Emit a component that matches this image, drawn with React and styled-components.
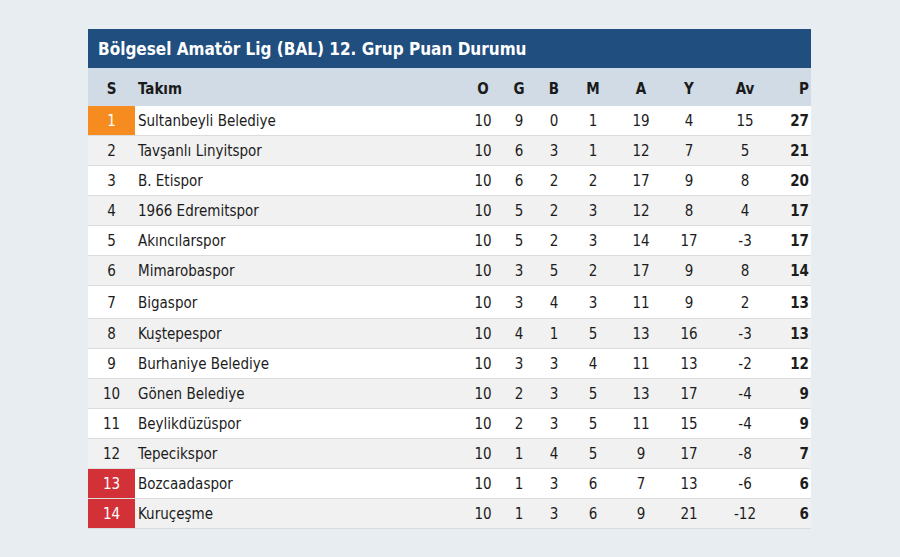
import React from "react";
import styled, { createGlobalStyle } from "styled-components";

const Global = createGlobalStyle`
  html, body { margin: 0; padding: 0; background: #e8edf2; }
  body { font-family: "DejaVu Sans Condensed", "DejaVu Sans", sans-serif; color: #1c1c1c; }
`;

const Page = styled.div`
  width: 900px;
  height: 557px;
  padding-top: 29px;
  box-sizing: border-box;
  display: flex;
  justify-content: center;
`;

const Table = styled.div`
  width: 723px;
  margin-left: -1px;
  display: flex;
  flex-direction: column;
`;

const Title = styled.div`
  height: 39px;
  background: #1f4e7f;
  color: #fff;
  font-weight: bold;
  font-size: 17px;
  display: flex;
  align-items: center;
  padding-left: 10px;
`;

const cols = "47px 328px 40px 32px 38px 40px 56px 40px 72px 30px";

const HeadRow = styled.div`
  display: grid;
  grid-template-columns: ${cols};
  height: 38px;
  box-sizing: border-box;
  padding-top: 2px;
  align-items: stretch;
  background: #d0dbe6;
  font-weight: bold;
  font-size: 15px;
  color: #1a1a1a;
`;

const Row = styled.div`
  display: grid;
  grid-template-columns: ${cols};
  height: ${(p) => (p.$tall ? 32 : 29)}px;
  border-bottom: 1px solid #dcdcdc;
  background: ${(p) => (p.$alt ? "#f1f1f1" : "#ffffff")};
  font-size: 15px;
  align-items: stretch;
`;

const Cell = styled.div`
  display: flex;
  align-items: center;
  padding-top: 1px;
  justify-content: ${(p) => (p.$align === "left" ? "flex-start" : p.$align === "right" ? "flex-end" : "center")};
  padding-left: ${(p) => (p.$align === "left" ? "3px" : "0")};
  padding-right: ${(p) => (p.$align === "right" ? "2px" : "0")};
  ${(p) => (p.$bold ? "font-weight: bold;" : "")}
`;

const Rank = styled(Cell)`
  background: ${(p) => (p.$zone === "top" ? "#f68b1f" : p.$zone === "down" ? "#d23237" : "transparent")};
  color: ${(p) => (p.$zone ? "#fff" : "#1c1c1c")};
`;

const data = [
  [1, "Sultanbeyli Belediye", 10, 9, 0, 1, 19, 4, 15, 27],
  [2, "Tavşanlı Linyitspor", 10, 6, 3, 1, 12, 7, 5, 21],
  [3, "B. Etispor", 10, 6, 2, 2, 17, 9, 8, 20],
  [4, "1966 Edremitspor", 10, 5, 2, 3, 12, 8, 4, 17],
  [5, "Akıncılarspor", 10, 5, 2, 3, 14, 17, -3, 17],
  [6, "Mimarobaspor", 10, 3, 5, 2, 17, 9, 8, 14],
  [7, "Bigaspor", 10, 3, 4, 3, 11, 9, 2, 13],
  [8, "Kuştepespor", 10, 4, 1, 5, 13, 16, -3, 13],
  [9, "Burhaniye Belediye", 10, 3, 3, 4, 11, 13, -2, 12],
  [10, "Gönen Belediye", 10, 2, 3, 5, 13, 17, -4, 9],
  [11, "Beylikdüzüspor", 10, 2, 3, 5, 11, 15, -4, 9],
  [12, "Tepecikspor", 10, 1, 4, 5, 9, 17, -8, 7],
  [13, "Bozcaadaspor", 10, 1, 3, 6, 7, 13, -6, 6],
  [14, "Kuruçeşme", 10, 1, 3, 6, 9, 21, -12, 6],
];

const heads = ["O", "G", "B", "M", "A", "Y", "Av"];

export default function App() {
  return (
    <>
      <Global />
      <Page>
        <Table>
          <Title>Bölgesel Amatör Lig (BAL) 12. Grup Puan Durumu</Title>
          <HeadRow>
            <Cell>S</Cell>
            <Cell $align="left">Takım</Cell>
            {heads.map((h) => (
              <Cell key={h}>{h}</Cell>
            ))}
            <Cell $align="right">P</Cell>
          </HeadRow>
          {data.map((r, i) => {
            const zone = r[0] === 1 ? "top" : r[0] >= 13 ? "down" : null;
            return (
              <Row key={r[0]} $alt={i % 2 === 1} $tall={r[0] === 7}>
                <Rank $zone={zone}>{r[0]}</Rank>
                <Cell $align="left">{r[1]}</Cell>
                {r.slice(2, 9).map((v, j) => (
                  <Cell key={j}>{v}</Cell>
                ))}
                <Cell $align="right" $bold>{r[9]}</Cell>
              </Row>
            );
          })}
        </Table>
      </Page>
    </>
  );
}
